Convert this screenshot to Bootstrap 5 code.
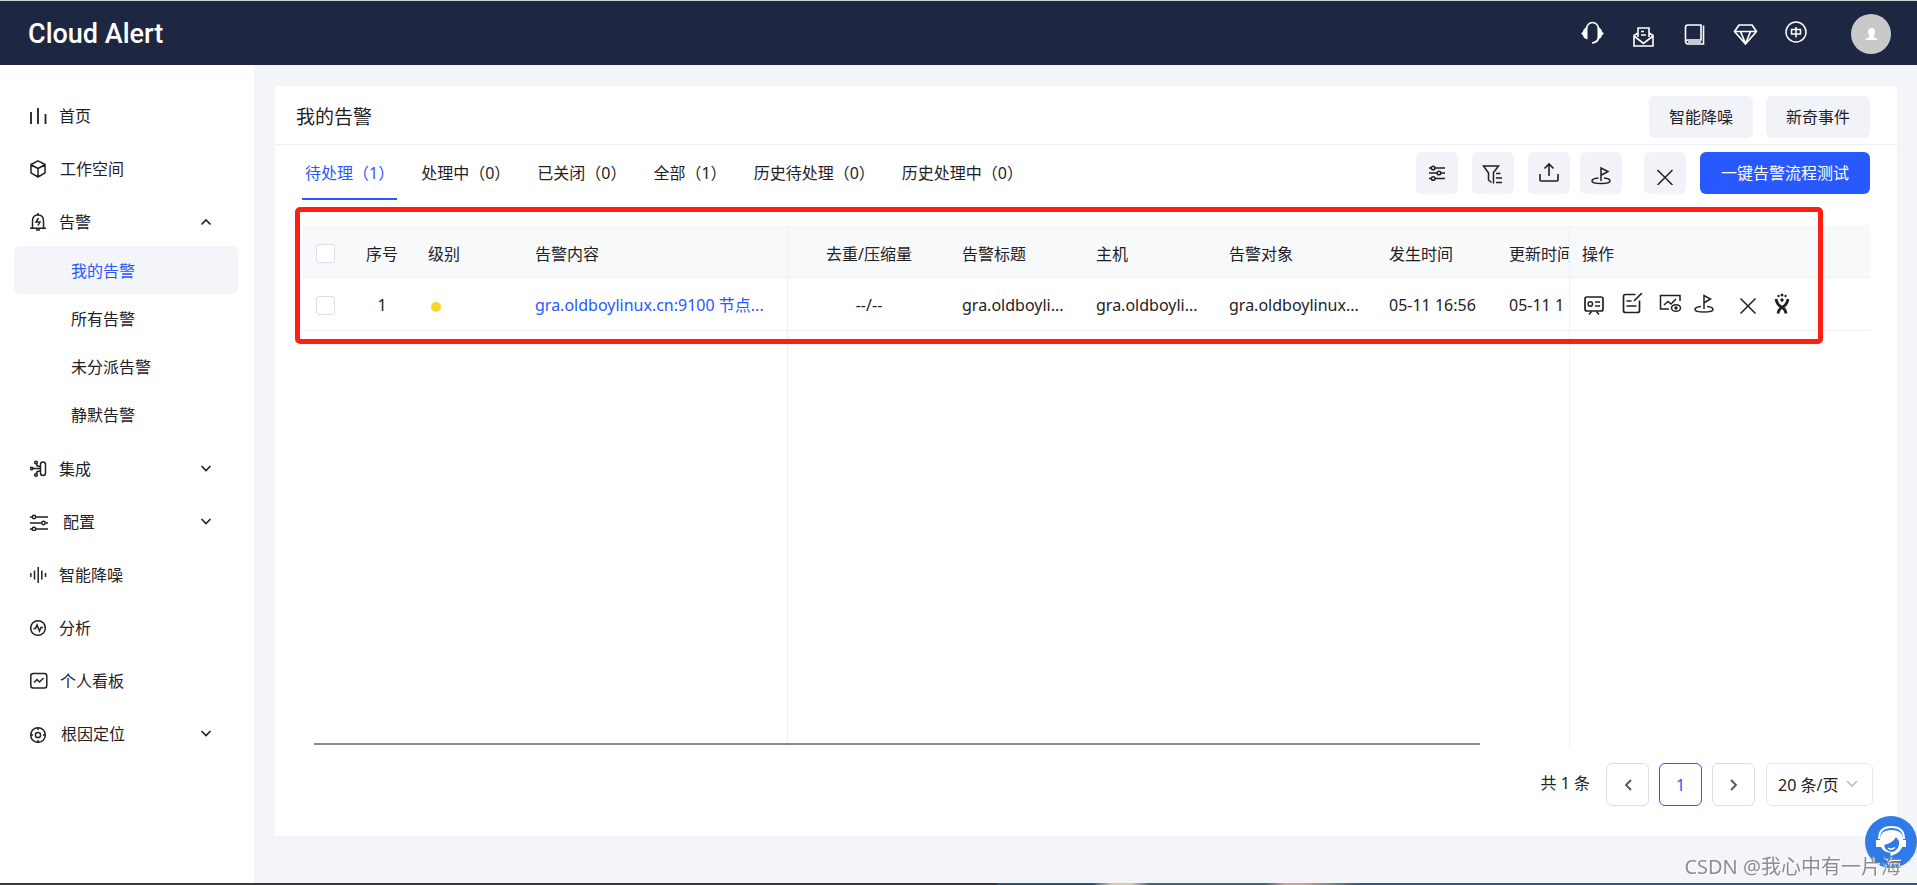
<!DOCTYPE html>
<html lang="zh-CN">
<head>
<meta charset="utf-8">
<meta name="viewport" content="width=device-width, initial-scale=1">
<title>Cloud Alert - 我的告警</title>
<link href="https://cdn.jsdelivr.net/npm/bootstrap@5.3.0/dist/css/bootstrap.min.css" rel="stylesheet">
<style>
  :root { --brand: #2858ff; --ink: #1f2126; --soft: #f2f3f8; --line: #eff0f5; --page: #f4f5f8; }
  body { font-family: "Noto Sans", "Noto Sans CJK SC", sans-serif; font-size: 16px; line-height: 24px; color: var(--ink); background: var(--page); }
  svg { fill: none; stroke: currentColor; stroke-width: 1.5; flex: none; display: block; }
  a { color: inherit; text-decoration: none; }

  .topbar { height: 65px; background: #1e2741; border-top: 1px solid #cdd2cc; padding: 2px 26px 0 28px; color: #fff; }
  .logo { font: 500 27px/36px Roboto, sans-serif; color: #fff; }
  .top-icons { gap: 23px; margin-right: 41px; }
  .avatar { width: 40px; height: 40px; background: #c9c9c9; }

  .side { width: 254px; padding-top: 28px; background: #fff; }
  .side-item { height: 46px; margin-bottom: 7px; padding: 0 42px 0 30px; gap: 11px; }
  .side-sub { margin: -6px 16px 8px 14px; }
  .side-sub a { display: block; height: 48px; line-height: 50px; padding-left: 57px; border-radius: 6px; }
  .side-sub a.current { background: var(--page); color: var(--brand); }

  .work { padding: 21px 20px 47px 21px; min-width: 0; }
  .panel-head { height: 59px; padding: 4px 27px 0 21px; gap: 13px; border-bottom: 1px solid var(--line); }
  .panel-head h1 { font-size: 19px; line-height: 28px; font-weight: 400; margin: 0; }
  .btn-soft, .btn-tool { height: 42px; background: var(--soft); color: var(--ink); border: 0; border-radius: 6px; font-size: 16px; line-height: 24px; }
  .btn-soft { width: 104px; padding: 0; }
  .btn-tool { width: 42px; padding: 0; display: flex; align-items: center; justify-content: center; }
  .btn-run { width: 170px; height: 42px; padding: 0; font-size: 16px; border: 0; border-radius: 6px; background: var(--brand); }
  .tools-row { padding: 7px 27px 0 27px; height: 80px; }
  .tool-set { gap: 14px; margin-right: 10px; }
  .tool-end { gap: 14px; margin-left: 22px; }
  .tabs { gap: 21px; }
  .tabs .nav-link { padding: 9px 3px 0; height: 48px; color: var(--ink); border-bottom: 2px solid transparent; }
  .tabs .nav-link.active { color: var(--brand); border-color: var(--brand); }

  .grid-wrap { margin: 0 27px; }
  .alerts { table-layout: fixed; width: 100%; margin: 0; border-collapse: separate; border-spacing: 0; }
  .alerts th, .alerts td { font-weight: 400; height: 53px; padding: 2px 12px 0; vertical-align: middle; white-space: nowrap; overflow: hidden; border-bottom: 1px solid var(--line); }
  .alerts th { background: #f8f9fb; padding-top: 5px; }
  .alerts .spacer td { height: 416px; border-bottom: 0; }
  .alerts .edge { border-right: 1px solid var(--line); }
  .alerts .clip { padding-right: 0; }
  .alerts .form-check-input { width: 19px; height: 19px; margin: 0; border: 1px solid #dcdfe8; border-radius: 3px; display: block; position: static; }
  .alerts .pick { padding-left: 14px; padding-right: 0; }
  .dot { display: block; width: 10px; height: 10px; margin: 4px 0 0 3px; border-radius: 50%; background: #f9d52c; }
  .ops { gap: 10px; }
  .ops a { display: block; }
  .ops .apart { margin-left: 10px; }
  .scroll-track { position: absolute; left: 12px; right: 390px; bottom: 2px; height: 2px; background: #8b8b8b; }
  .marker { position: absolute; left: -7px; right: 47px; top: -18px; height: 137px; border: 5px solid #ff1f12; border-radius: 5px; pointer-events: none; }

  .pager { padding: 16px 24px 0; }
  .pager .pagination { gap: 10px; }
  .pager .page-link, .pager select { height: 43px; border: 1px solid #dcdee4; border-radius: 6px; background: #fff; color: var(--ink); }
  .pager .page-link { width: 43px; padding: 0; display: flex; align-items: center; justify-content: center; color: #555; }
  .pager .page-item.active .page-link { color: var(--brand); border-color: var(--brand); background: #fff; }
  .pager .page-item .page-link { margin: 0; border-radius: 6px; }
  .size-box { position: relative; margin-left: 11px; }
  .size-box select { appearance: none; width: 107px; padding: 0 0 0 11px; border-color: #e6e8ee; font-size: 16px; }
  .size-box svg { position: absolute; right: 14px; top: 15px; color: #b9bdc8; pointer-events: none; }

  .helper { position: fixed; right: 0; bottom: 17px; width: 52px; height: 52px; border: 0; padding: 0; border-radius: 50%; background: #2f7be8; }
  .credit { position: fixed; right: 16px; bottom: 3px; font-size: 20px; line-height: 30px; color: #8c8e91; text-shadow: 1px 1px 0 #fff; }
  .desk { height: 2px; background: linear-gradient(90deg, #38383c 0 52%, #2a5578 52% 57%, #d9c9b0 58% 59%, #45607e 60% 66%, #c5a68f 67% 68%, #2b5b88 71% 100%); }
</style>
</head>
<body class="d-flex flex-column min-vh-100">

<header class="topbar d-flex align-items-center">
  <a class="logo me-auto" href="#">Cloud Alert</a>
  <nav class="top-icons d-flex" aria-label="工具">
    <a href="#" aria-label="客服"><svg width="28" height="28" viewBox="0 0 28 28"><path d="M8 9.500Q9.500 2.500 14.500 2.500T21 9.500v7q-1 6-7 6.500" stroke-width="1.700"/><path d="M9.500 7v12.500Q5.500 18.500 4.800 15L3 13.500l1.800-1.500Q5.500 8 9.500 7zM19.500 7v12.500q4-1 4.700-4.500L26 13.500 24.200 12Q23.500 8 19.500 7z" fill="currentColor" stroke="none"/></svg></a>
    <a href="#" aria-label="订阅"><svg width="28" height="28" viewBox="0 0 28 28"><path d="M9 17V8h11v9M9 13l-4 2.500V26h19V15.500L20 13M5 16l9.500 7.500L24 16M12 11.500h3M12 15h5" stroke-width="1.600"/></svg></a>
    <a href="#" aria-label="文档"><svg width="28" height="28" viewBox="0 0 28 28"><path d="M8 5h13v15H8q-2.500 0-2.500 2.500V7.500Q5.500 5 8 5zM5.500 21.500Q6 24 8 24h15.500V5.500M8 22h13" stroke-width="1.600"/></svg></a>
    <a href="#" aria-label="会员"><svg width="28" height="28" viewBox="0 0 28 28"><path d="M8 5h13l4.500 6.500L14.500 24 3.500 11.500zM3.500 11.500h22M9.500 11.500l5 12 5-12" stroke-width="1.700" stroke-linejoin="round"/></svg></a>
    <a href="#" aria-label="语言"><svg width="28" height="28" viewBox="0 0 28 28"><circle cx="14" cy="12" r="10" stroke-width="1.500"/><path d="M9.500 9.500h9v4.500h-9zM14 7v10.500" stroke-width="1.500"/></svg></a>
  </nav>
  <a class="avatar rounded-circle d-flex align-items-center justify-content-center" href="#" aria-label="账户"><svg width="14" height="14" viewBox="0 0 14 14"><path d="M7.500 1q3.500 0 3.500 4 0 2.500-1.500 4 0 1.500 2 2 2 .5 2 2H1.500q0-1.500 2-2t2-2Q4 7.500 4 5q0-4 3.500-4z" fill="#fff" stroke="none"/></svg></a>
</header>

<div class="d-flex flex-grow-1">
  <nav class="side flex-shrink-0" aria-label="主菜单">
    <a class="side-item d-flex align-items-center" href="#"><svg width="18" height="18" viewBox="0 0 18 18"><path d="M1 5v12M8 1v16M15.500 7v10" stroke-width="1.800"/></svg>首页</a>
    <a class="side-item d-flex align-items-center" href="#"><svg width="19" height="18" viewBox="0 0 19 18"><path d="M8 .8l7 3.700v8.400L8 17 1 12.900V4.500zM1.500 5L8 8.500 14.500 5M8 8.500V16" stroke-linejoin="round"/></svg>工作空间</a>
    <a class="side-item d-flex align-items-center" href="#"><svg width="18" height="18" viewBox="0 0 18 18"><path d="M2.500 15V8Q2.500 2 8 2t5.500 6v7M0 15.200h16M6 17h4M7 1h2M8.500 5L6 9h4l-2 3.500" /></svg>告警<svg class="ms-auto" width="12" height="8" viewBox="0 0 12 8"><path d="M1.500 6.500L6 2l4.500 4.500" stroke-width="1.600"/></svg></a>
    <div class="side-sub">
      <a class="current" href="#">我的告警</a>
      <a href="#">所有告警</a>
      <a href="#">未分派告警</a>
      <a href="#">静默告警</a>
    </div>
    <a class="side-item d-flex align-items-center" href="#"><svg width="18" height="18" viewBox="0 0 18 18"><rect x="10.500" y="2" width="5" height="13.500" rx="2.500"/><circle cx="1.800" cy="8.500" r="1.200"/><circle cx="6" cy="2.500" r="1.300"/><circle cx="6" cy="15" r="1.300"/><path d="M3 8.500h7.500M6.500 4q0 2.500 3.500 2.500M6.500 13.500q0-2.500 3.500-2.500"/></svg>集成<svg class="ms-auto" width="12" height="8" viewBox="0 0 12 8"><path d="M1.500 1L6 5.500 10.500 1" stroke-width="1.600"/></svg></a>
    <a class="side-item d-flex align-items-center" href="#"><svg width="22" height="18" viewBox="0 0 22 18"><path d="M0 4h2M6 4h12M0 10h11.500M15.500 10H18M0 16h2M6 16h12" stroke-width="1.700"/><circle cx="4" cy="4" r="1.700"/><circle cx="13.500" cy="10" r="1.700"/><circle cx="4" cy="16" r="1.700"/></svg>配置<svg class="ms-auto" width="12" height="8" viewBox="0 0 12 8"><path d="M1.500 1L6 5.500 10.500 1" stroke-width="1.600"/></svg></a>
    <a class="side-item d-flex align-items-center" href="#"><svg width="18" height="18" viewBox="0 0 18 18"><path d="M.8 7v4M4.500 4.500v9M8.200 1v16M11.800 4.500v9M15.500 7v4"/></svg>智能降噪</a>
    <a class="side-item d-flex align-items-center" href="#"><svg width="18" height="18" viewBox="0 0 18 18"><circle cx="8" cy="9" r="7.300"/><path d="M3.500 9.500h2L7 6l2.500 6 1.500-3.500h2"/></svg>分析</a>
    <a class="side-item d-flex align-items-center" href="#"><svg width="19" height="18" viewBox="0 0 19 18"><rect x=".8" y="1.500" width="16" height="14.500" rx="2.500"/><path d="M4 10.500l3-3 2.500 2.500 4-4"/></svg>个人看板</a>
    <a class="side-item d-flex align-items-center" href="#"><svg width="20" height="18" viewBox="0 0 20 18"><circle cx="8" cy="10" r="7.300"/><circle cx="8" cy="10" r="2.600"/><path d="M8 3v2M8 15v2M1 10h2M13 10h2"/></svg>根因定位<svg class="ms-auto" width="12" height="8" viewBox="0 0 12 8"><path d="M1.500 1L6 5.500 10.500 1" stroke-width="1.600"/></svg></a>
  </nav>

  <main class="work flex-grow-1 d-flex">
    <section class="bg-white flex-grow-1 overflow-hidden">
      <div class="panel-head d-flex align-items-center">
        <h1 class="me-auto">我的告警</h1>
        <button class="btn btn-soft" type="button">智能降噪</button>
        <button class="btn btn-soft" type="button">新奇事件</button>
      </div>

      <div class="tools-row d-flex">
        <ul class="nav tabs me-auto flex-nowrap text-nowrap">
          <li class="nav-item"><a class="nav-link active" href="#" aria-current="page">待处理（1）</a></li>
          <li class="nav-item"><a class="nav-link" href="#">处理中（0）</a></li>
          <li class="nav-item"><a class="nav-link" href="#">已关闭（0）</a></li>
          <li class="nav-item"><a class="nav-link" href="#">全部（1）</a></li>
          <li class="nav-item"><a class="nav-link" href="#">历史待处理（0）</a></li>
          <li class="nav-item"><a class="nav-link" href="#">历史处理中（0）</a></li>
        </ul>
        <div class="tool-set d-flex">
          <button class="btn btn-tool" type="button" aria-label="列设置"><svg width="24" height="24" viewBox="0 0 24 24"><path d="M4 7h2.500M10 7h10M4 12h8M16 12h4M4 17.500h2.500M10 17.500h10"/><circle cx="8.200" cy="7" r="1.800"/><circle cx="14" cy="12" r="1.800"/><circle cx="8.200" cy="17.500" r="1.800"/></svg></button>
          <button class="btn btn-tool" type="button" aria-label="筛选"><svg width="24" height="24" viewBox="0 0 24 24"><path d="M12.500 22.500V11.500L17.500 5H2.500l5 7v7l3 2.500M15 12.500h4.500M15 17h6M15 21.500h6"/></svg></button>
          <button class="btn btn-tool" type="button" aria-label="导出"><svg width="24" height="24" viewBox="0 0 24 24"><path d="M12 15V3M7.500 7.500L12 3l4.500 4.500M3 13v6q0 1 1 1h16q1 0 1-1v-6" stroke-width="1.600"/></svg></button>
        </div>
        <button class="btn btn-tool" type="button" aria-label="关闭条件"><svg width="24" height="24" viewBox="0 0 24 24"><path d="M12 20V7l7 3.500-6.500 3.500M9.500 17Q3 17.500 3 20t9 2.500 9-2.500-6-3"/></svg></button>
        <div class="tool-end d-flex">
          <button class="btn btn-tool" type="button" aria-label="关闭"><svg width="24" height="24" viewBox="0 0 24 24"><path d="M4.500 9l15 15M19.500 9l-15 15"/></svg></button>
          <button class="btn btn-primary btn-run" type="button">一键告警流程测试</button>
        </div>
      </div>

      <div class="grid-wrap position-relative">
        <table class="alerts">
          <colgroup>
            <col style="width:46px"><col style="width:68px"><col style="width:107px"><col style="width:265px"><col style="width:162px"><col style="width:134px"><col style="width:133px"><col style="width:160px"><col style="width:120px"><col style="width:73px"><col>
          </colgroup>
          <thead>
            <tr>
              <th class="pick"><input class="form-check-input" type="checkbox" aria-label="全选"></th>
              <th class="text-center">序号</th><th>级别</th><th class="edge">告警内容</th>
              <th class="text-center">去重/压缩量</th><th>告警标题</th><th>主机</th><th>告警对象</th><th>发生时间</th><th class="edge clip">更新时间</th><th>操作</th>
            </tr>
          </thead>
          <tbody>
            <tr>
              <td class="pick"><input class="form-check-input" type="checkbox" aria-label="选择第 1 行"></td>
              <td class="text-center">1</td>
              <td><span class="dot"></span></td>
              <td class="edge clip"><a href="#" style="color:var(--brand)">gra.oldboylinux.cn:9100 节点...</a></td>
              <td class="text-center">--/--</td>
              <td>gra.oldboyli...</td>
              <td>gra.oldboyli...</td>
              <td>gra.oldboylinux...</td>
              <td>05-11 16:56</td>
              <td class="edge clip">05-11 1</td>
              <td>
                <div class="ops d-flex">
                  <a href="#" aria-label="认领"><svg width="24" height="24" viewBox="0 0 24 24"><rect x="3" y="4" width="18" height="14" rx="2" stroke-width="1.700"/><circle cx="8.300" cy="11" r="2.200"/><path d="M13 9h5M13 13h5M9.500 18.500L7 21.500M14.500 18.500l2.500 3"/></svg></a>
                  <a class="ms-1" href="#" aria-label="备注"><svg width="24" height="24" viewBox="0 0 24 24"><path d="M15.500 1.500H5.500q-2 0-2 2v14q0 2 2 2h12q2 0 2-2V7.500M14 8l8-8M6.500 8h5M6.500 13h10" stroke-width="1.700"/></svg></a>
                  <a class="ms-1" href="#" aria-label="静默"><svg width="24" height="24" viewBox="0 0 24 24"><path d="M22 8V2.500H2.500v13.500H11M6 12l4-3.500 3 2.500 5-5"/><ellipse cx="18" cy="15" rx="4.500" ry="3.300"/><circle cx="18" cy="15" r="1"/></svg></a>
                  <a href="#" aria-label="关闭条件"><svg width="24" height="24" viewBox="0 0 24 24"><path d="M12 16V2.500l6.500 3.500L12.500 9.500M9 13.500q-6 .500-6 3t9 2.500 9-2.500-6-3"/></svg></a>
                  <a class="apart" href="#" aria-label="关闭"><svg width="24" height="24" viewBox="0 0 24 24"><path d="M4.500 5.500l15 15M19.500 5.500l-15 15"/></svg></a>
                  <a href="#" aria-label="Jira"><svg width="24" height="24" viewBox="0 0 24 24"><path d="M6 6q1 6 5.500 8 4 2 4.500 6.500M18 6q-1 6-5.500 8-4 2-4.500 6.500" stroke-width="2.800"/><g fill="currentColor" stroke="none"><circle cx="12" cy="2" r="1.500"/><circle cx="8.500" cy="3" r="1.200"/><circle cx="15.500" cy="3" r="1.200"/><circle cx="12" cy="7" r="1.700"/></g></svg></a>
                </div>
              </td>
            </tr>
            <tr class="spacer" aria-hidden="true"><td colspan="4" class="edge"></td><td colspan="6" class="edge"></td><td></td></tr>
          </tbody>
        </table>
        <div class="scroll-track"></div>
        <div class="marker"></div>
      </div>

      <div class="pager d-flex justify-content-end">
        <span class="pt-2 me-3">共 1 条</span>
        <ul class="pagination mb-0">
          <li class="page-item"><a class="page-link" href="#" aria-label="上一页"><svg width="12" height="14" viewBox="0 0 12 14"><path d="M9 2L4 7l5 5" stroke-width="1.800"/></svg></a></li>
          <li class="page-item active"><a class="page-link" href="#">1</a></li>
          <li class="page-item"><a class="page-link" href="#" aria-label="下一页"><svg width="12" height="14" viewBox="0 0 12 14"><path d="M3 2l5 5-5 5" stroke-width="1.800"/></svg></a></li>
        </ul>
        <div class="size-box">
          <select aria-label="每页条数"><option>20 条/页</option><option>50 条/页</option></select>
          <svg width="14" height="12" viewBox="0 0 14 12"><path d="M2 3l5 5 5-5" stroke-width="1.600"/></svg>
        </div>
      </div>
    </section>
  </main>
</div>
<div class="desk"></div>

<button class="helper" type="button" aria-label="在线客服"><svg width="52" height="52" viewBox="0 0 52 52"><path d="M14 23q0-12 12.500-12T39 23" stroke="#fff" stroke-width="2"/><path d="M15 24q0-10 11.500-10T38 24l3 0v7h-4q-2 6-9 8-1 1.500-3 0l1-2q-8-1-10-6h-5v-7z" fill="#fff" stroke="none"/><path d="M19 29q9-2 12-8l3 4q1 9-7 11-7-1-8-7z" fill="#2f7be8" stroke="none"/><path d="M23 32q3.500 2.500 7-.5" stroke="#fff"/></svg></button>
<div class="credit">CSDN @我心中有一片海</div>

<script src="https://cdn.jsdelivr.net/npm/bootstrap@5.3.0/dist/js/bootstrap.bundle.min.js"></script>
</body>
</html>
